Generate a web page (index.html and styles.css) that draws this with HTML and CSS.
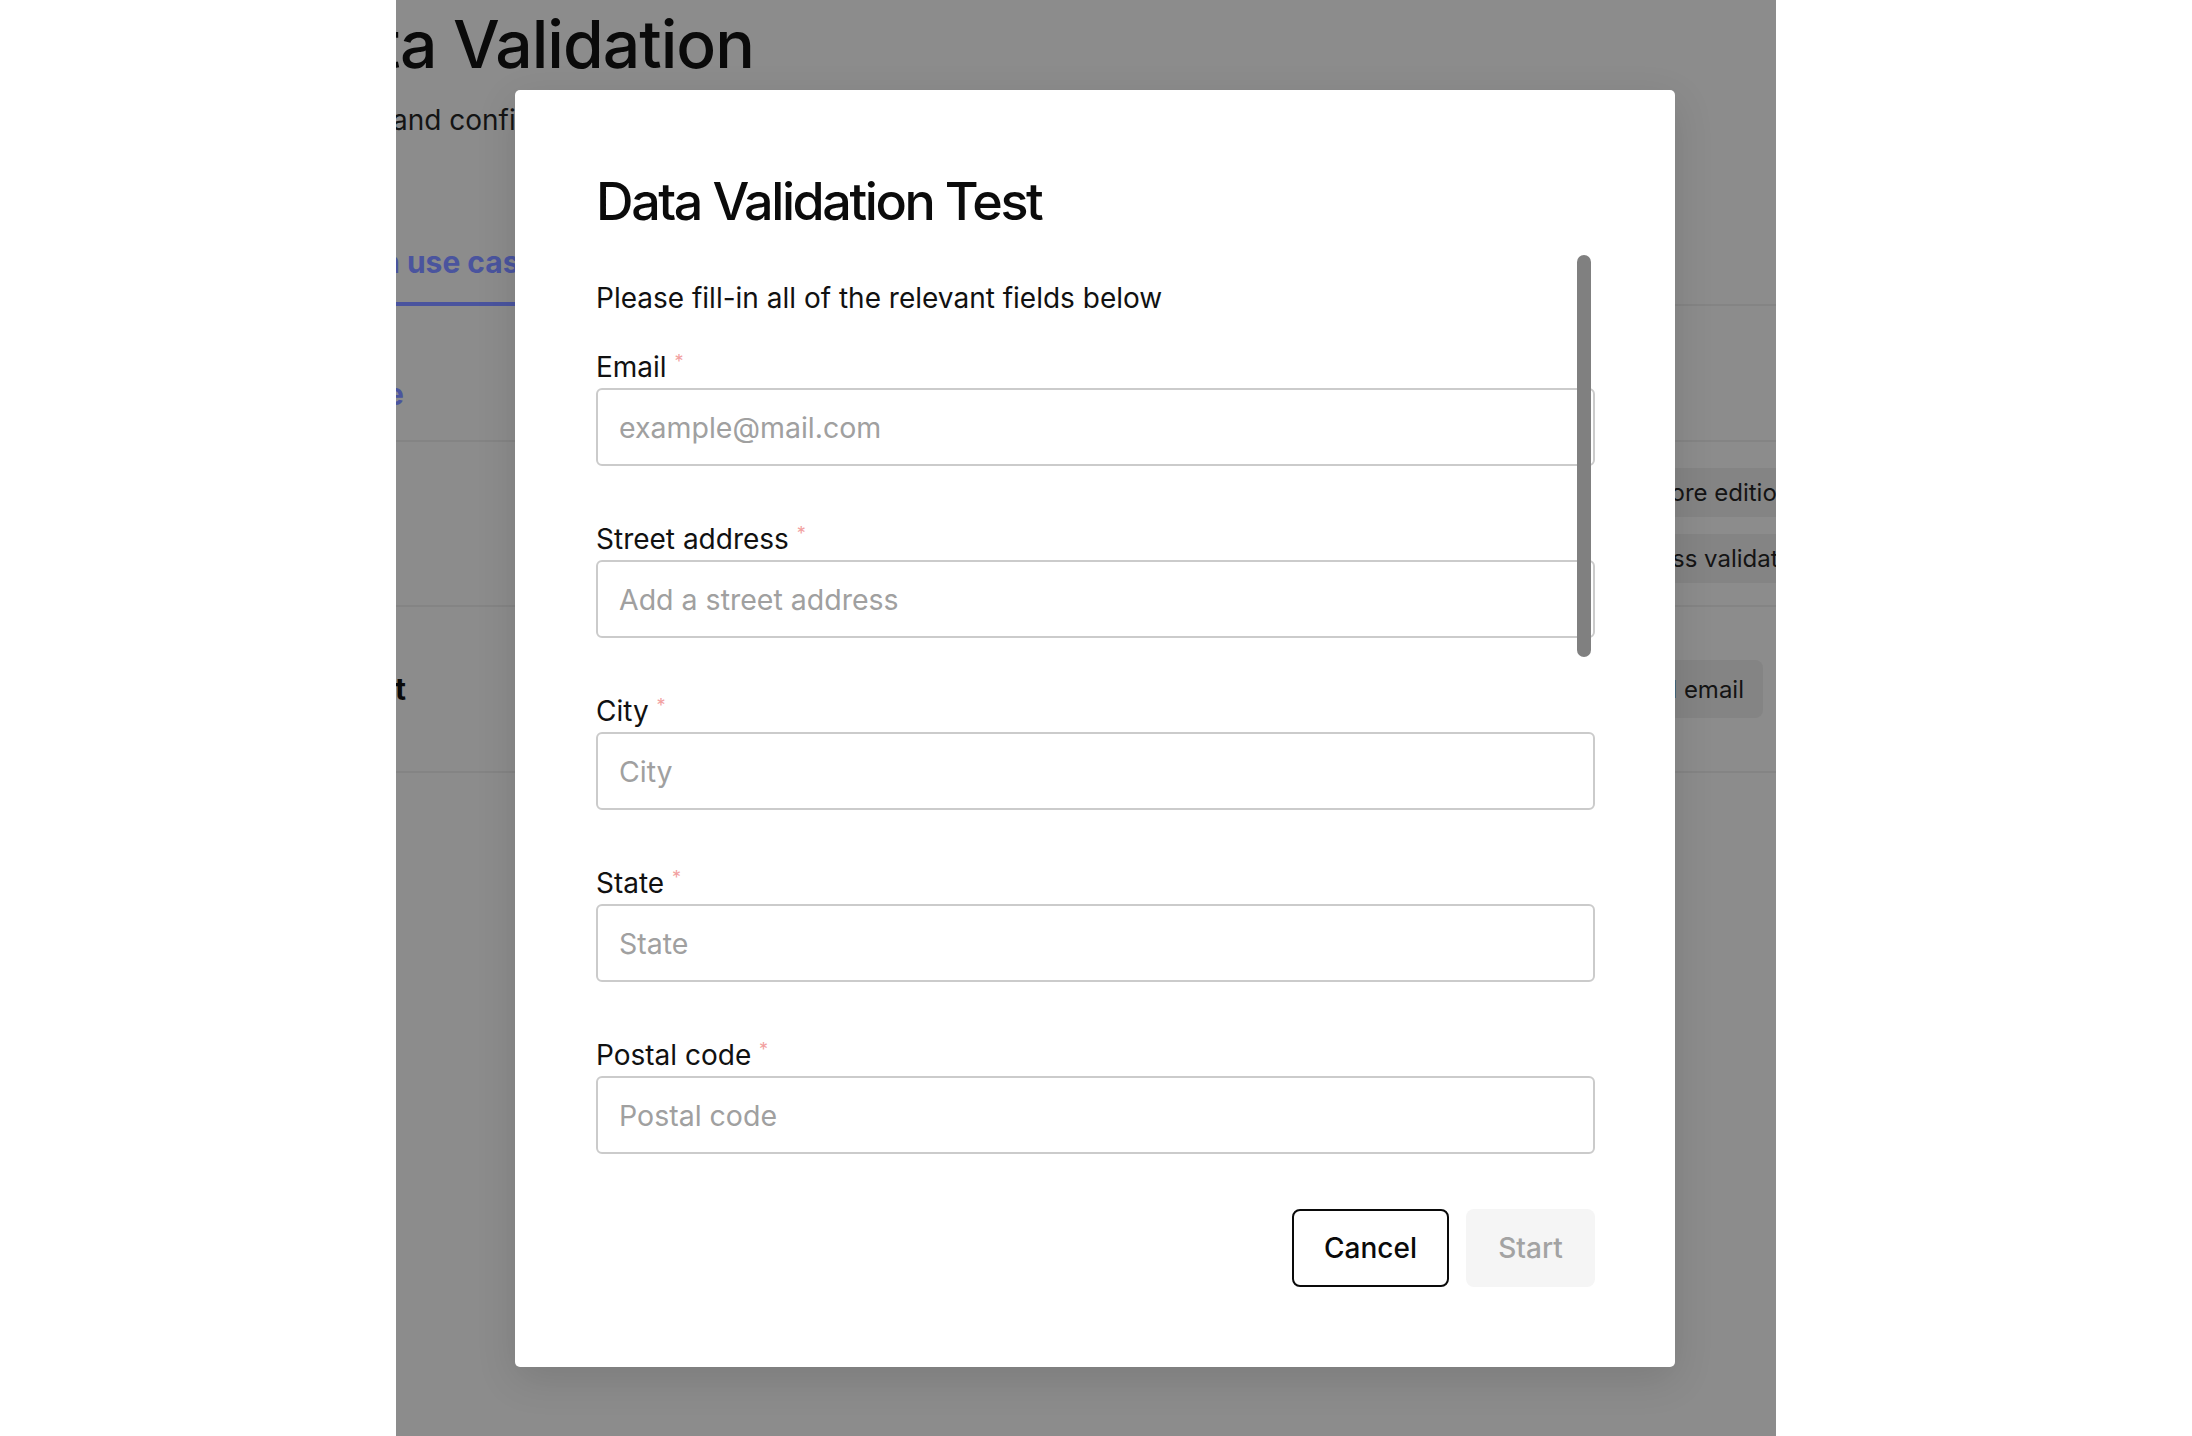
FILE: index.html
```html
<!DOCTYPE html>
<html lang="en">
<head>
<meta charset="utf-8">
<title>Data Validation Test</title>
<link rel="stylesheet" href="styles.css">
</head>
<body>
<div class="page">
  <div class="bg">
    <h1 class="bg-title">Data Validation</h1>
    <p class="bg-sub">and configure data validation rules for your records</p>
    <div class="bg-tabs"><span class="bg-tab">in use cases</span></div>
    <div class="bg-row row1"><span class="bg-link">e</span></div>
    <div class="bg-row row2">
      <div class="bg-tags">
        <span class="bg-tag t1">Explore edition</span>
        <span class="bg-tag t2">Address validation</span>
      </div>
    </div>
    <div class="bg-row row3">
      <span class="bg-name">t</span>
      <span class="bg-tag t3">Personal email</span>
    </div>
  </div>
</div>

<div class="modal">
  <h2 class="modal-title">Data Validation Test</h2>
  <div class="modal-body">
    <p class="intro">Please fill-in all of the relevant fields below</p>
    <div class="field">
      <label class="label">Email <span class="req">*</span></label>
      <div class="input"><span class="ph">example@mail.com</span></div>
    </div>
    <div class="field">
      <label class="label">Street address <span class="req">*</span></label>
      <div class="input"><span class="ph">Add a street address</span></div>
    </div>
    <div class="field">
      <label class="label">City <span class="req">*</span></label>
      <div class="input"><span class="ph">City</span></div>
    </div>
    <div class="field">
      <label class="label">State <span class="req">*</span></label>
      <div class="input"><span class="ph">State</span></div>
    </div>
    <div class="field">
      <label class="label">Postal code <span class="req">*</span></label>
      <div class="input"><span class="ph">Postal code</span></div>
    </div>
  </div>
  <div class="modal-footer">
    <button class="btn btn-cancel">Cancel</button>
    <button class="btn btn-start">Start</button>
  </div>
  <div class="scroll-thumb"></div>
</div>
</body>
</html>
```

FILE: styles.css
```css
* { box-sizing: border-box; }
html, body { margin: 0; padding: 0; }
body {
  background: #ffffff;
  width: 2192px;
  height: 1436px;
  overflow: hidden;
  font-family: Inter, "Noto Sans", sans-serif;
  color: #111;
}

.page {
  margin-left: 396px;
  width: 1380px;
  height: 1436px;
  background: #8c8c8c;
  overflow: hidden;
}

.bg { width: 1380px; }

.bg-title {
  margin: 4px 0 0 -101px;
  font-size: 66px;
  line-height: 80px;
  font-weight: 500;
  color: #0a0a0a;
  letter-spacing: -1px;
  white-space: nowrap;
}

.bg-sub {
  margin: 16px 0 0 -4px;
  font-size: 28px;
  line-height: 40px;
  color: #141414;
  white-space: nowrap;
}

.bg-tabs {
  margin-top: 102px;
  border-bottom: 2px solid #848484;
  display: flex;
}
.bg-tab {
  margin-left: -23px;
  width: 150px;
  font-size: 30px;
  line-height: 40px;
  font-weight: 700;
  color: #4a549e;
  padding-bottom: 20px;
  border-bottom: 4px solid #4a549e;
  margin-bottom: -2px;
  white-space: nowrap;
  overflow: hidden;
}

.bg-row {
  border-bottom: 2px solid #848484;
  display: flex;
}
.row1 { height: 136px; align-items: flex-start; padding-top: 68px; }
.row2 { height: 165px; justify-content: flex-end; }
.row3 { height: 166px; align-items: center; justify-content: space-between; }

.bg-link {
  margin-left: -10px;
  font-size: 30px;
  line-height: 40px;
  font-weight: 700;
  color: #4a549e;
}

.bg-tags {
  display: flex;
  flex-direction: column;
  align-items: flex-end;
  gap: 17px;
  padding-top: 26px;
}
.bg-tag {
  background: #848484;
  border-radius: 8px;
  font-size: 24px;
  color: #141414;
  white-space: nowrap;
  display: flex;
  align-items: center;
  padding: 0 16px;
}
.t1 { height: 49px; margin-right: -31px; }
.t2 { height: 49px; margin-right: -53px; }
.t3 { height: 58px; margin-right: 13px; padding: 0 19px; }

.bg-name {
  margin-left: -1px;
  font-size: 30px;
  font-weight: 700;
  color: #0a0a0a;
}

/* modal */
.modal {
  position: absolute;
  left: 515px;
  top: 90px;
  width: 1160px;
  height: 1277px;
  background: #ffffff;
  border-radius: 5px;
  padding: 81px 80px 80px 81px;
  box-shadow: 0 12px 40px rgba(0,0,0,0.12);
  display: flex;
  flex-direction: column;
}

.modal-title {
  margin: 0;
  font-size: 52px;
  line-height: 62px;
  font-weight: 500;
  letter-spacing: -2.4px;
  color: #0b0b0b;
}

.modal-body {
  margin-top: 47px;
  display: flex;
  flex-direction: column;
  gap: 55px;
}

.intro {
  margin: 0 0 -22px 0;
  font-size: 28px;
  line-height: 36px;
  color: #111;
}

.field { display: flex; flex-direction: column; gap: 3px; }

.label {
  font-size: 28px;
  line-height: 36px;
  color: #111;
}

.req {
  color: #f2a0a0;
  font-size: 18px;
  vertical-align: 9px;
  line-height: 0;
}

.input {
  height: 78px;
  border: 2px solid #cbcbcb;
  border-radius: 6px;
  padding: 0 21px;
  display: flex;
  align-items: center;
}

.ph {
  font-size: 28.5px;
  color: #a0a0a0;
}

.modal-footer {
  margin-top: 55px;
  display: flex;
  justify-content: flex-end;
  gap: 17px;
}

.btn {
  height: 78px;
  border-radius: 8px;
  font-family: Inter, "Noto Sans", sans-serif;
  font-size: 28px;
  font-weight: 500;
  padding: 0;
  display: flex;
  align-items: center;
  justify-content: center;
}
.btn-cancel {
  width: 157px;
  background: #ffffff;
  border: 2px solid #0a0a0a;
  color: #0a0a0a;
}
.btn-start {
  width: 129px;
  background: #f5f5f5;
  border: none;
  color: #a3a3a3;
}

.scroll-thumb {
  position: absolute;
  left: 1062px;
  top: 165px;
  width: 14px;
  height: 402px;
  border-radius: 7px;
  background: #808080;
}
```
